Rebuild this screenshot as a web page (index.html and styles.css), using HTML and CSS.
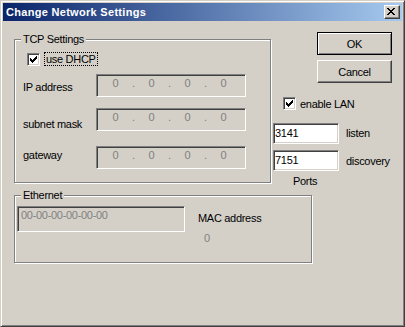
FILE: index.html
```html
<!DOCTYPE html>
<html>
<head>
<meta charset="utf-8">
<link rel="stylesheet" href="styles.css">
</head>
<body>
<div class="window">
  <div class="titlebar">
    <span class="title">Change Network Settings</span>
    <span class="close"><svg width="8" height="7" viewBox="0 0 8 7" shape-rendering="crispEdges"><path fill="#000" d="M0 0h2v1h-2zM6 0h2v1h-2zM1 1h2v1h-2zM5 1h2v1h-2zM2 2h4v1h-4zM3 3h2v1h-2zM2 4h4v1h-4zM1 5h2v1h-2zM5 5h2v1h-2zM0 6h2v1h-2zM6 6h2v1h-2z"/></svg></span>
  </div>
  <div class="body">
    <div class="top">
      <div class="group tcp">
        <span class="legend">TCP Settings</span>
        <div class="check-row">
          <span class="checkbox"><svg width="11" height="11" viewBox="1 1 11 11" shape-rendering="crispEdges"><path fill="#000" d="M9 3h1v1h-1zM8 4h2v1h-2zM3 5h1v1h-1zM7 5h3v1h-3zM3 6h2v1h-2zM6 6h3v1h-3zM3 7h5v1h-5zM4 8h3v1h-3zM5 9h1v1h-1z"/></svg></span>
          <span class="focus">use DHCP</span>
        </div>
        <div class="row row-ip">
          <span class="label">IP address</span>
          <div class="ipfield"><span class="seg">0</span><span class="dot">.</span><span class="seg">0</span><span class="dot">.</span><span class="seg">0</span><span class="dot">.</span><span class="seg">0</span></div>
        </div>
        <div class="row row-mask">
          <span class="label">subnet mask</span>
          <div class="ipfield"><span class="seg">0</span><span class="dot">.</span><span class="seg">0</span><span class="dot">.</span><span class="seg">0</span><span class="dot">.</span><span class="seg">0</span></div>
        </div>
        <div class="row row-gw">
          <span class="label">gateway</span>
          <div class="ipfield"><span class="seg">0</span><span class="dot">.</span><span class="seg">0</span><span class="dot">.</span><span class="seg">0</span><span class="dot">.</span><span class="seg">0</span></div>
        </div>
      </div>
      <div class="side">
        <div class="buttons">
          <div class="btn default">OK</div>
          <div class="btn">Cancel</div>
        </div>
        <div class="lan">
          <span class="checkbox"><svg width="11" height="11" viewBox="1 1 11 11" shape-rendering="crispEdges"><path fill="#000" d="M9 3h1v1h-1zM8 4h2v1h-2zM3 5h1v1h-1zM7 5h3v1h-3zM3 6h2v1h-2zM6 6h3v1h-3zM3 7h5v1h-5zM4 8h3v1h-3zM5 9h1v1h-1z"/></svg></span>
          <span class="lan-text">enable LAN</span>
        </div>
        <div class="port port-listen">
          <div class="textfield">3141</div>
          <span class="port-label">listen</span>
        </div>
        <div class="port port-disc">
          <div class="textfield">7151</div>
          <span class="port-label">discovery</span>
        </div>
        <div class="ports-label">Ports</div>
      </div>
    </div>
    <div class="group eth">
      <span class="legend">Ethernet</span>
      <div class="macfield">00-00-00-00-00-00</div>
      <div class="mac-info">
        <div>MAC address</div>
        <div class="mac-count">0</div>
      </div>
    </div>
  </div>
</div>
</body>
</html>
```
FILE: styles.css
```css
html, body {
  margin: 0;
  padding: 0;
  background: #d4d0c8;
}

.window {
  width: 405px;
  height: 327px;
  box-sizing: border-box;
  border: 1px solid;
  border-color: #d4d0c8 #404040 #404040 #d4d0c8;
  box-shadow: inset 1px 1px 0 #fff, inset -1px -1px 0 #808080;
  padding: 2px;
  background: #d4d0c8;
  font-family: "Liberation Sans", Arial, sans-serif;
  font-size: 11px;
  line-height: 13px;
  letter-spacing: -0.3px;
  color: #000;
  overflow: hidden;
}

.titlebar {
  height: 18px;
  display: flex;
  align-items: flex-start;
  justify-content: space-between;
  background: linear-gradient(to right, #0a246a, #a6caf0);
}

.title {
  color: #fff;
  font-weight: bold;
  letter-spacing: 0.3px;
  margin: 3px 0 0 3px;
  white-space: nowrap;
}

.close {
  width: 16px;
  height: 14px;
  box-sizing: border-box;
  margin: 2px 2px 0 0;
  background: #d4d0c8;
  border: 1px solid;
  border-color: #fff #404040 #404040 #fff;
  box-shadow: inset -1px -1px 0 #808080;
  display: flex;
  align-items: flex-start;
}

.close svg {
  display: block;
  margin: 2px 0 0 2px;
}

.top {
  display: flex;
  align-items: flex-start;
}

.group {
  position: relative;
  box-sizing: border-box;
  border: 1px solid #808080;
  box-shadow: 1px 1px 0 #fff, inset 1px 1px 0 #fff;
}

.legend {
  position: absolute;
  top: -7px;
  left: 6px;
  padding: 0 2px;
  background: #d4d0c8;
  white-space: nowrap;
}

.tcp {
  width: 257px;
  height: 144px;
  margin: 18px 0 0 11px;
  padding: 13px 0 0 8px;
}

.check-row {
  display: flex;
  align-items: flex-start;
  margin-left: 4px;
  height: 13px;
}

.checkbox {
  width: 13px;
  height: 13px;
  box-sizing: border-box;
  border: 1px solid;
  border-color: #808080 #fff #fff #808080;
  box-shadow: inset 1px 1px 0 #404040, inset -1px -1px 0 #d4d0c8;
  background: #fff;
  flex: none;
}

.checkbox svg {
  display: block;
}

.focus {
  margin: -1px 0 0 4px;
  border: 1px dotted #000;
  padding: 0 1px;
  line-height: 12px;
  white-space: nowrap;
}

.row {
  display: flex;
  align-items: flex-start;
}

.label {
  width: 73px;
  flex: none;
  white-space: nowrap;
}

.row-ip { margin-top: 8px; }
.row-ip .label { padding-top: 7px; }
.row-mask { margin-top: 11px; }
.row-mask .label { padding-top: 10px; }
.row-gw { margin-top: 15px; }
.row-gw .label { padding-top: 3px; }

.ipfield {
  width: 150px;
  height: 23px;
  box-sizing: border-box;
  border: 1px solid;
  border-color: #808080 #fff #fff #808080;
  box-shadow: inset 1px 1px 0 #404040, inset -1px -1px 0 #d4d0c8;
  padding: 2px 0 0 2px;
  display: flex;
  color: #808080;
}

.seg {
  width: 33px;
  text-align: center;
  flex: none;
}

.dot {
  width: 3px;
  text-align: center;
  flex: none;
}

.side {
  margin-left: 2px;
  display: flex;
  flex-direction: column;
  align-items: flex-start;
}

.buttons {
  margin: 11px 0 0 44px;
  display: flex;
  flex-direction: column;
  gap: 5px;
}

.btn {
  width: 75px;
  height: 23px;
  box-sizing: border-box;
  border: 1px solid;
  border-color: #fff #404040 #404040 #fff;
  box-shadow: inset -1px -1px 0 #808080;
  padding-top: 5px;
  text-align: center;
}

.btn.default {
  border-color: #000;
  box-shadow: inset 1px 1px 0 #fff, inset -1px -1px 0 #808080;
}

.lan {
  margin: 14px 0 0 10px;
  display: flex;
  align-items: flex-start;
}

.lan-text {
  margin-left: 4px;
  padding-top: 1px;
  white-space: nowrap;
}

.port {
  display: flex;
  align-items: flex-start;
}

.port-listen { margin-top: 12px; }
.port-disc { margin-top: 6px; }

.textfield {
  width: 66px;
  height: 21px;
  box-sizing: border-box;
  border: 1px solid;
  border-color: #808080 #fff #fff #808080;
  box-shadow: inset 1px 1px 0 #404040, inset -1px -1px 0 #d4d0c8;
  background: #fff;
  padding: 3px 0 0 1px;
}

.port-label {
  margin-left: 7px;
  padding-top: 4px;
  white-space: nowrap;
}

.port-disc .port-label { padding-top: 5px; }

.ports-label {
  margin: 4px 0 0 20px;
}

.eth {
  width: 298px;
  height: 68px;
  margin: 7px 0 0 11px;
  padding: 10px 0 0 2px;
  display: flex;
  align-items: flex-start;
}

.macfield {
  width: 168px;
  height: 26px;
  box-sizing: border-box;
  border: 1px solid;
  border-color: #808080 #fff #fff #808080;
  box-shadow: inset 1px 1px 0 #404040, inset -1px -1px 0 #d4d0c8;
  padding: 2px 0 0 3px;
  color: #808080;
  white-space: nowrap;
  flex: none;
}

.mac-info {
  margin-left: 13px;
  padding-top: 6px;
  white-space: nowrap;
}

.mac-count {
  margin: 7px 0 0 6px;
  color: #808080;
}
```
